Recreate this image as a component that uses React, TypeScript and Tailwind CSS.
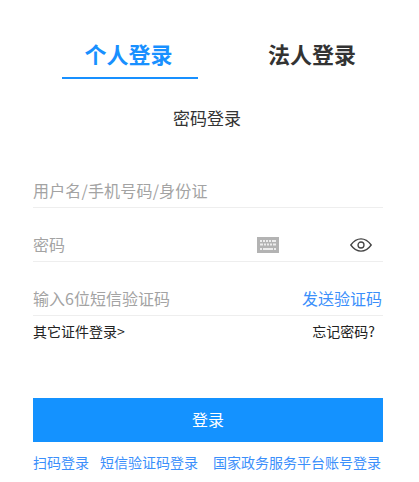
import { useState } from "react"

const fontStack = "font-['Noto_Sans_CJK_SC','Noto_Sans',sans-serif]"

function KeyboardIcon() {
  return (
    <svg width="22" height="16" viewBox="0 0 22 16" className="block mt-[2px]">
      <rect width="22" height="16" fill="#b3b3b3" />
      <g fill="#ececec">
        <rect x="3" y="3" width="2" height="2" />
        <rect x="6" y="3" width="2" height="2" />
        <rect x="9" y="3" width="2" height="2" />
        <rect x="12" y="3" width="2" height="2" />
        <rect x="15" y="3" width="4" height="2" />
        <rect x="3" y="6.5" width="3" height="2" />
        <rect x="7" y="6.5" width="2" height="2" />
        <rect x="10" y="6.5" width="2" height="2" />
        <rect x="13" y="6.5" width="2" height="2" />
        <rect x="16" y="6.5" width="3" height="2" />
        <rect x="3" y="11" width="2" height="2" />
        <rect x="6" y="11" width="10" height="2" />
        <rect x="17" y="11" width="2" height="2" />
      </g>
    </svg>
  )
}

function EyeIcon() {
  return (
    <svg width="22" height="14" viewBox="0 0 22 14" fill="none" stroke="#444" strokeWidth="1.3" className="block">
      <path d="M0.8 7C4 2.6 7.4 0.8 11 0.8S18 2.6 21.2 7C18 11.4 14.6 13.2 11 13.2S4 11.4 0.8 7Z" />
      <circle cx="11" cy="7" r="3" />
    </svg>
  )
}

export default function App() {
  const [tab, setTab] = useState("personal")

  return (
    <div className={`${fontStack} w-[419px] h-[482px] bg-white overflow-hidden`}>
      {/* Tabs */}
      <div className="flex pt-[34px] pl-[62px]">
        <button
          onClick={() => setTab("personal")}
          className={`w-[136px] h-[45px] pb-[5px] pr-[3px] border-b-2 text-[22px] leading-[38px] font-bold ${
            tab === "personal" ? "text-[#1890ff] border-[#1890ff]" : "text-[#333] border-transparent"
          }`}
        >
          个人登录
        </button>
        <button
          onClick={() => setTab("legal")}
          className={`w-[136px] h-[45px] pb-[5px] ml-[46px] border-b-2 text-[22px] leading-[38px] font-bold ${
            tab === "legal" ? "text-[#1890ff] border-[#1890ff]" : "text-[#333] border-transparent"
          }`}
        >
          法人登录
        </button>
      </div>

      <div className="mt-[27px] text-center text-[17px] leading-6 text-[#333] pr-[5px]">密码登录</div>

      {/* Form */}
      <div className="mx-[33px] w-[350px] mt-[24px]">
        <div className="flex items-center h-[54px] pt-[24px] pb-[5px] border-b border-[#eeeeee] text-base leading-6 text-[#a3a3a3]">
          <span className="tracking-[0.17px]">用户名/手机号码/身份证</span>
        </div>
        <div className="flex items-center h-[54px] pt-[24px] pb-[5px] border-b border-[#eeeeee] text-base leading-6 text-[#a3a3a3]">
          <span className="flex-1">密码</span>
          <KeyboardIcon />
          <span className="ml-[71px] mr-[11px] mt-[2px]">
            <EyeIcon />
          </span>
        </div>
        <div className="flex items-center justify-between h-[54px] pt-[24px] pb-[5px] border-b border-[#eeeeee] text-base leading-6">
          <span className="text-[#a3a3a3]">输入6位短信验证码</span>
          <span className="text-[#3b8ffb] mr-px">发送验证码</span>
        </div>
        <div className="flex items-center justify-between h-[30px] text-sm text-[#222]">
          <span>其它证件登录&gt;</span>
          <span className="mr-[8px]">忘记密码?</span>
        </div>

        <button className="block w-full h-[44px] mt-[52px] pb-[2px] bg-[#1492ff] text-white text-base">登录</button>

        <div className="flex h-[40px] items-center text-sm text-[#3b8ffb]">
          <span>扫码登录</span>
          <span className="ml-[11px]">短信验证码登录</span>
          <span className="ml-[15px]">国家政务服务平台账号登录</span>
        </div>
      </div>
    </div>
  )
}
